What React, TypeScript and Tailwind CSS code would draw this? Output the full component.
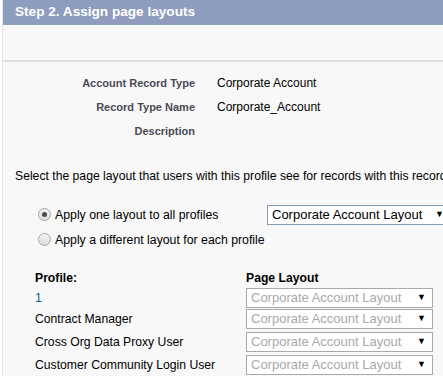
import React from 'react';

const FONT = { fontFamily: '"Liberation Sans", Arial, sans-serif' };

const DETAILS = [
  { label: 'Account Record Type', value: 'Corporate Account' },
  { label: 'Record Type Name', value: 'Corporate_Account' },
  { label: 'Description', value: '' },
];

const PROFILES = ['1', 'Contract Manager', 'Cross Org Data Proxy User', 'Customer Community Login User'];

function Radio({ checked }: { checked?: boolean }) {
  return (
    <span className="flex h-[13px] w-[13px] shrink-0 items-center justify-center rounded-full border border-[#a8a8a8] bg-gradient-to-b from-[#f4f4f4] to-[#dcdcdc]">
      {checked && <span className="h-[5px] w-[5px] rounded-full bg-[#4a4a4a]" />}
    </span>
  );
}

export default function App() {
  return (
    <div className="h-[376px] w-[443px] overflow-hidden bg-white" style={FONT}>
      <div className="ml-[2px] h-full border-l border-[#e3e3e3] bg-[#f8f8f8]">
        {/* header */}
        <div className="flex h-[25px] items-center bg-[#8e9dbe] pl-[12px] text-[13.6px] font-bold text-white">
          Step 2. Assign page layouts
        </div>
        <div className="h-[1px] bg-white" />
        <div className="h-[36px] border-b-2 border-[#dedede]" />

        {/* record type details */}
        <div className="flex flex-col pt-[9px]">
          {DETAILS.map((d) => (
            <div key={d.label} className="flex h-[24px] items-center">
              <div className="w-[192px] text-right text-[11px] font-bold text-[#4a4a56]">{d.label}</div>
              <div className="pl-[22px] text-[12px] text-black">{d.value}</div>
            </div>
          ))}
        </div>

        <div className="mt-[24px] whitespace-nowrap pl-[12px] text-[12.2px] text-black">
          Select the page layout that users with this profile see for records with this record type.
        </div>

        {/* radios */}
        <div className="mt-[17px] flex flex-col pl-[35px]">
          <div className="flex h-[25px] items-center">
            <div className="flex w-[229px] shrink-0 items-center gap-[4px] text-[12.3px] text-black">
              <Radio checked />
              <span>Apply one layout to all profiles</span>
            </div>
            <div className="flex h-[20px] w-[184px] shrink-0 items-center border border-[#7f9db9] bg-white pl-[4px] text-[13px] text-black">
              <span className="flex-1 whitespace-nowrap">Corporate Account Layout</span>
              <span className="pr-[6px] text-[9px]">▼</span>
            </div>
          </div>
          <div className="flex h-[25px] items-center gap-[4px] text-[12.3px] text-black">
            <Radio />
            <span>Apply a different layout for each profile</span>
          </div>
        </div>

        {/* profiles */}
        <div className="mt-[15px] flex flex-col pl-[32px]">
          <div className="flex h-[21px] items-center text-[12.2px] font-bold text-black">
            <div className="w-[211px]">Profile:</div>
            <div>Page Layout</div>
          </div>
          {PROFILES.map((p, i) => (
            <div key={p} className={i === 0 ? 'flex h-[19px] items-center text-[12.2px]' : 'flex h-[23px] items-center text-[12.2px]'}>
              <div className={i === 0 ? 'w-[211px] text-[#015ba7]' : 'w-[211px] text-black'}>{p}</div>
              <div className="flex h-[20px] w-[187px] shrink-0 items-center border border-[#a9a9a9] bg-white pl-[4px] text-[13px] text-[#a9a9a9]">
                <span className="flex-1 whitespace-nowrap">Corporate Account Layout</span>
                <span className="pr-[6px] text-[9px] text-black">▼</span>
              </div>
            </div>
          ))}
        </div>
      </div>
    </div>
  );
}
